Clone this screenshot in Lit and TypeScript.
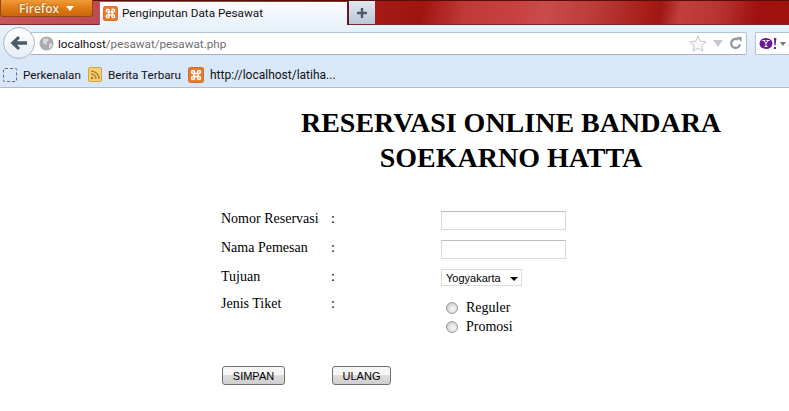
import { LitElement, html, css } from "lit";
import { customElement } from "lit/decorators.js";

const xampp = (s: number) => html`<svg width=${s} height=${s} viewBox="0 0 16 16" class="ico">
  <rect x=".5" y=".5" width="15" height="15" rx="2" fill="#e8792d" stroke="#d9691f"/>
  <path d="M6 6.500H5a1.500 1.500 0 1 1 1.500-1.500v1M10 6.500h1A1.500 1.500 0 1 0 9.500 5v1M6 9.500H5A1.500 1.500 0 1 0 6.500 11v-1M10 9.500h1A1.500 1.500 0 1 1 9.500 11v-1M6 5.800v4.400M10 5.800v4.400M6 6.500h4M6 9.500h4" fill="none" stroke="#fff" stroke-width="1.500"/>
</svg>`;

@customElement("app-root")
export class AppRoot extends LitElement {
  static styles = css`
    :host { display: block; width: 789px; height: 411px; overflow: hidden; background: #fff; font-family: "Liberation Serif", serif; color: #000; }
    .ico { display: block; flex: none; }
    .tabs { height: 25px; display: flex; align-items: flex-start; border-top: 1px solid #5a0c0c; border-bottom: 1px solid #7a2a30; box-sizing: border-box;
      background: linear-gradient(100deg, #c9555f 0, #c14a55 95px, #a61a16 375px, #a01410 417px, #c03a36 460px, #c8403f 507px, #c84c4c 540px, #ba3a36 590px, #a61d17 640px, #a01612 652px, #c0403a 672px, #b83430 710px, #9e110e 748px, #a01410 789px); }
    .ffbtn { width: 93px; height: 17px; margin-top: -1px; box-sizing: border-box; flex: none; border: 1px solid #8e4a10; border-top: none; border-radius: 0 0 3px 3px;
      background: linear-gradient(#f09a3a, #e07c14 50%, #c9660e); color: #fbeedd; font: 600 12px "Open Sans", sans-serif; display: flex; align-items: center; gap: 7px; padding-left: 18px; text-shadow: 0 0 2px #8a4a10; }
    .ffbtn i { width: 0; height: 0; border: 4px solid transparent; border-top: 5px solid #fff; border-bottom: 0; }
    .tab { margin: 1px 0 0 6px; width: 250px; height: 23px; box-sizing: border-box; flex: none; background: linear-gradient(#fdfeff, #e9f1fb); display: flex; align-items: center; gap: 4px; padding: 0 0 1px 3px; border-right: 2px solid #5e1a20; border-left: 1px solid #a06068; font: 11.750px Roboto, sans-serif; color: #111; position: relative; z-index: 2; }
    .newtab { width: 26px; height: 23px; flex: none; box-sizing: border-box; background: linear-gradient(#dfe7f1, #bcc8d6); display: flex; align-items: center; justify-content: center; }
    .nav { height: 30px; box-sizing: border-box; background: linear-gradient(#eaf2fb, #dce9f7); display: flex; align-items: flex-start; padding: 0 0 0 3px; position: relative; z-index: 1; }
    .back { width: 32px; height: 32px; box-sizing: border-box; border-radius: 50%; border: 1px solid #a9b8c8; background: linear-gradient(#fff, #e6edf5); flex: none; display: flex; align-items: center; justify-content: center; margin-top: 2px; position: relative; z-index: 1; }
    .url { flex: 1; height: 23px; box-sizing: border-box; margin: 7px 0 0 -4px; background: #fff; border: 1px solid #b4c3d3; border-bottom-color: #a5b4c2; border-left: none; border-radius: 0 2px 2px 0; display: flex; align-items: center; padding: 0 4px 0 8px; font: 11.700px Roboto, sans-serif; }
    .url b { font-weight: 400; color: #111; margin-left: 4px; }
    .url span { color: #6f6f6f; flex: 1; }
    .url .tools { display: flex; align-items: center; gap: 6px; }
    .search { width: 34px; height: 23px; margin: 7px 0 0 8px; box-sizing: border-box; background: #fff; border: 1px solid #b4c3d3; border-right: none; border-radius: 2px 0 0 2px; display: flex; align-items: center; gap: 3px; padding-left: 3px; flex: none; }
    .marks { height: 33px; box-sizing: border-box; background: #d9e8f8; border-bottom: 1px solid #aebccb; display: flex; align-items: center; padding: 7px 0 0 3px; font: 11.700px Roboto, sans-serif; color: #111; }
    .marks .m { display: flex; align-items: center; gap: 6px; margin-right: 7px; }
    .marks .last { font-size: 12px; }
    .dash { width: 14px; height: 14px; box-sizing: border-box; border: 1px dashed #667; border-radius: 2px; }
    .page { padding: 17px 0 0 221px; }
    h1 { margin: 0 0 0 12px; width: 556px; text-align: center; font-size: 28px; line-height: 35px; font-weight: 700; }
    .form { margin-top: 36px; display: grid; grid-template-columns: 110px 110px 1fr; grid-template-rows: 29px 29px 27px 40px; font-size: 14px; line-height: 16px; }
    input[type="text"] { display: block; width: 125px; height: 19px; box-sizing: border-box; border: 1px solid #d9d9d9; border-top-color: #bdbdbd; background: #fff; margin: 0; padding: 0; }
    .sel { width: 81px; height: 17px; box-sizing: border-box; border: 1px solid #dcdcdc; font: 11px "Liberation Sans", sans-serif; display: flex; align-items: center; padding-left: 4px; gap: 9px; }
    .sel i { width: 0; height: 0; border: 4px solid transparent; border-top: 4px solid #000; border-bottom: 0; margin-top: 2px; }
    .radio { display: flex; align-items: center; height: 19px; gap: 8px; padding-left: 5px; }
    .dot { width: 12px; height: 12px; box-sizing: border-box; border-radius: 50%; border: 1px solid #9a9a9a; background: radial-gradient(circle at 60% 60%, #fafafa, #d4d4d4 65%, #bbb); }
    .radios { padding-top: 2px; }
    .btns { display: flex; margin: 30px 0 0 1px; }
    button { height: 19px; box-sizing: border-box; padding: 0; border: 1px solid #707070; border-radius: 3px; background: linear-gradient(#f6f6f6 45%, #dcdcdc 50%, #cfcfcf); font: 11px "Liberation Sans", sans-serif; color: #000; }
    .b1 { width: 63px; margin-right: 47px; }
    .b2 { width: 59px; }
  `;

  render() {
    return html`
      <div class="tabs">
        <div class="ffbtn">Firefox <i></i></div>
        <div class="tab">${xampp(15)}<span>Penginputan Data Pesawat</span></div>
        <div class="newtab"><svg width="12" height="12" viewBox="0 0 12 12"><path d="M6 1v10M1 6h10" stroke="#4d5a68" stroke-width="2.400"/></svg></div>
      </div>
      <div class="nav">
        <div class="back"><svg width="18" height="16" viewBox="0 0 18 16"><path d="M0.500 8L8 1l2 2-3 3.200h10v3.600H7L10 13l-2 2z" fill="#4b5a6b"/></svg></div>
        <div class="url">
          <svg class="ico" width="15" height="15" viewBox="0 0 15 15"><circle cx="7.500" cy="7.500" r="7" fill="#a9abae"/><path d="M4 3l4-1 2 2-2 2-1 3-3-2zM10 8l3-1 0 3-3 3z" fill="#d9dadb"/></svg>
          <b>localhost</b><span>/pesawat/pesawat.php</span>
          <div class="tools">
            <svg width="18" height="17" viewBox="0 0 18 17"><path d="M9 1l2.400 5.200 5.600.6-4.200 3.800 1.200 5.600L9 13.400 4 16.200l1.200-5.600L1 6.800l5.600-.6z" fill="#f8f8f8" stroke="#c0c4c8"/></svg>
            <svg width="10" height="7" viewBox="0 0 10 7"><path d="M0 0h10L5 7z" fill="#c3c9cf"/></svg>
            <svg width="13" height="13" viewBox="0 0 13 13"><path d="M11 7.500A4.500 4.500 0 1 1 9 2.600" fill="none" stroke="#8d969f" stroke-width="2.200"/><path d="M7.500 0h5v5z" fill="#8d969f"/></svg>
          </div>
        </div>
        <div class="search">
          <svg width="18" height="13" viewBox="0 0 18 13"><ellipse cx="7" cy="6.500" rx="6.500" ry="5.500" fill="#6b1a96"/><path d="M3.500 3.500h3M7.500 3.500h3M5 3.500l2 3 2-3M7 6.500v3M5.500 9.500h3" stroke="#fff" stroke-width="1" fill="none"/><path d="M15 1h2.400l-.8 7.500h-1.200z M15 10h2v2h-2z" fill="#6b1a96"/></svg>
          <svg width="6" height="4" viewBox="0 0 6 4"><path d="M0 0h6L3 4z" fill="#777"/></svg>
        </div>
      </div>
      <div class="marks">
        <div class="m"><div class="dash"></div><span>Perkenalan</span></div>
        <div class="m"><svg class="ico" width="14" height="15" viewBox="0 0 14 15"><rect x=".5" y=".5" width="13" height="14" rx="1.500" fill="#f5d070" stroke="#cfa346"/><circle cx="4" cy="11" r="1.300" fill="#b9792a"/><path d="M3 7a5 5 0 0 1 5 5M3 4a8 8 0 0 1 8 8" fill="none" stroke="#b9792a" stroke-width="1.400"/></svg><span>Berita Terbaru</span></div>
        <div class="m last">${xampp(16)}<span>http://localhost/latiha...</span></div>
      </div>
      <div class="page">
        <h1>RESERVASI ONLINE BANDARA SOEKARNO HATTA</h1>
        <div class="form">
          <div>Nomor Reservasi</div><div>:</div><div><input type="text" /></div>
          <div>Nama Pemesan</div><div>:</div><div><input type="text" /></div>
          <div>Tujuan</div><div>:</div><div><div class="sel">Yogyakarta <i></i></div></div>
          <div>Jenis Tiket</div><div>:</div>
          <div class="radios">
            <div class="radio"><span class="dot"></span>Reguler</div>
            <div class="radio"><span class="dot"></span>Promosi</div>
          </div>
        </div>
        <div class="btns"><button class="b1">SIMPAN</button><button class="b2">ULANG</button></div>
      </div>
    `;
  }
}
